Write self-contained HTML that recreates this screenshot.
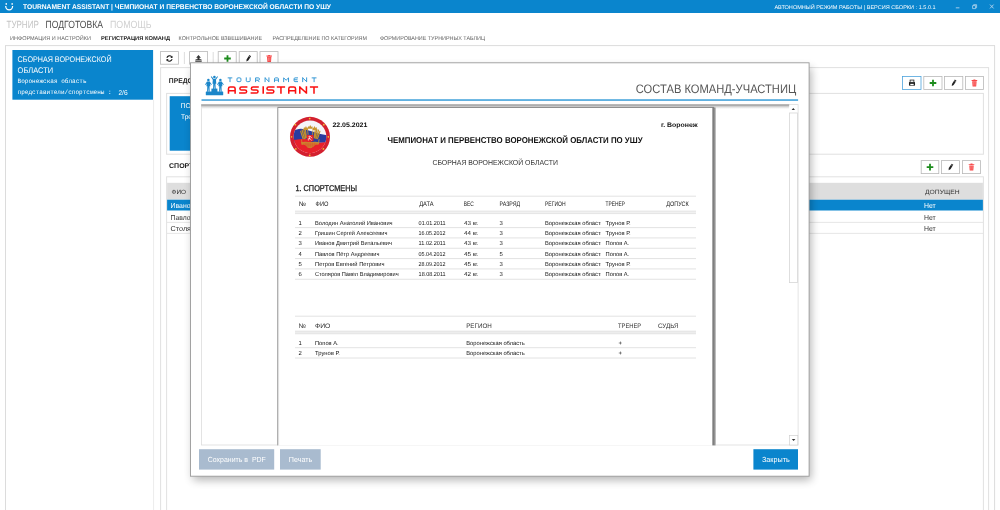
<!DOCTYPE html>
<html><head><meta charset="utf-8"><title>Tournament Assistant</title>
<style>
html,body{margin:0;padding:0;background:#fff;overflow:hidden}
body{width:1000px;height:510px;font-family:"Liberation Sans",sans-serif}
svg{display:block;opacity:0.999;will-change:transform;font-family:"Liberation Sans",sans-serif}
text{white-space:pre;text-rendering:geometricPrecision}
</style></head><body>
<svg width="1000" height="510" viewBox="0 0 1000 510">
<defs>
<filter id="sh" x="-10%" y="-10%" width="120%" height="125%"><feGaussianBlur stdDeviation="5"/></filter>
<linearGradient id="vtop" x1="0" y1="0" x2="0" y2="1"><stop offset="0" stop-color="#c4c4c4"/><stop offset="0.5" stop-color="#ececec"/><stop offset="1" stop-color="#ffffff"/></linearGradient>
<linearGradient id="pr" x1="0" y1="0" x2="1" y2="0"><stop offset="0" stop-color="#6e6e6e"/><stop offset="0.55" stop-color="#8c8c8c"/><stop offset="1" stop-color="#d4d4d4"/></linearGradient>
<clipPath id="emb"><circle cx="310" cy="136" r="17"/></clipPath>
<clipPath id="regclip"><rect x="540" y="215" width="61" height="70"/></clipPath>
</defs>
<rect x="0" y="0" width="1000" height="510" fill="#fff" />
<rect x="0" y="0" width="1000" height="13" fill="#0a85cd" />
<g fill="none" stroke="#fff" stroke-width="1.25" stroke-linecap="butt"><path d="M5.7 6 A3.45 3.9 0 0 0 12.6 6"/></g>
<rect x="5.6" y="3.1" width="1.3" height="1.7" fill="#fff"/><rect x="11.5" y="3.1" width="1.3" height="1.7" fill="#fff"/>
<text x="23" y="9.3" font-size="6.9" fill="#fff" font-weight="bold" textLength="308" lengthAdjust="spacingAndGlyphs">TOURNAMENT ASSISTANT | ЧЕМПИОНАТ И ПЕРВЕНСТВО ВОРОНЕЖСКОЙ ОБЛАСТИ ПО УШУ</text>
<text x="774.4" y="8.6" font-size="5.4" fill="#fff" textLength="161.3" lengthAdjust="spacingAndGlyphs">АВТОНОМНЫЙ РЕЖИМ РАБОТЫ | ВЕРСИЯ СБОРКИ : 1.5.0.1</text>
<rect x="955.8" y="7.4" width="3.6" height="0.9" fill="#b4d5ee" />
<path d="M972.6 5.6h3v3h-3z M973.6 5.6v-0.9h3v3h-1" fill="none" stroke="#b4d5ee" stroke-width="0.8"/>
<path d="M990 4.6l3.6 3.8M993.6 4.6l-3.6 3.8" stroke="#b4d5ee" stroke-width="0.9"/>
<text x="6.5" y="27.7" font-size="10.4" fill="#c4c4c4" textLength="32.3" lengthAdjust="spacingAndGlyphs">ТУРНИР</text>
<text x="45.5" y="27.7" font-size="10.4" fill="#505050" textLength="57.5" lengthAdjust="spacingAndGlyphs">ПОДГОТОВКА</text>
<text x="110" y="27.7" font-size="10.4" fill="#d0d0d0" textLength="41.6" lengthAdjust="spacingAndGlyphs">ПОМОЩЬ</text>
<text x="10" y="40.1" font-size="5.6" fill="#666" textLength="81" lengthAdjust="spacingAndGlyphs">ИНФОРМАЦИЯ И НАСТРОЙКИ</text>
<text x="101" y="40.1" font-size="5.6" fill="#222" font-weight="bold" textLength="69" lengthAdjust="spacingAndGlyphs">РЕГИСТРАЦИЯ КОМАНД</text>
<text x="178.6" y="40.1" font-size="5.6" fill="#666" textLength="83.4" lengthAdjust="spacingAndGlyphs">КОНТРОЛЬНОЕ ВЗВЕШИВАНИЕ</text>
<text x="272.5" y="40.1" font-size="5.6" fill="#666" textLength="94.5" lengthAdjust="spacingAndGlyphs">РАСПРЕДЕЛЕНИЕ ПО КАТЕГОРИЯМ</text>
<text x="380" y="40.1" font-size="5.6" fill="#666" textLength="105" lengthAdjust="spacingAndGlyphs">ФОРМИРОВАНИЕ ТУРНИРНЫХ ТАБЛИЦ</text>
<line x1="5" y1="45.6" x2="995" y2="45.6" stroke="#dcdcdc" stroke-width="1"/>
<line x1="5.5" y1="45.6" x2="5.5" y2="510" stroke="#dcdcdc" stroke-width="1"/>
<line x1="153.6" y1="100" x2="153.6" y2="510" stroke="#ececec" stroke-width="1"/>
<line x1="994.6" y1="45.6" x2="994.6" y2="510" stroke="#dcdcdc" stroke-width="1"/>
<rect x="12.4" y="50" width="140.7" height="49.7" fill="#0a85cd" />
<text x="17.6" y="62.2" font-size="8.1" fill="#fff" textLength="94" lengthAdjust="spacingAndGlyphs">СБОРНАЯ ВОРОНЕЖСКОЙ</text>
<text x="17.6" y="72.6" font-size="8.1" fill="#fff" textLength="35.6" lengthAdjust="spacingAndGlyphs">ОБЛАСТИ</text>
<text x="17.6" y="83.2" font-size="6.4" fill="#fff" font-family="Liberation Mono" textLength="69" lengthAdjust="spacingAndGlyphs">Воронежская область</text>
<text x="17.6" y="94" font-size="6.4" fill="#fff" font-family="Liberation Mono" textLength="94" lengthAdjust="spacingAndGlyphs">представители/спортсмены :</text>
<text x="118.4" y="94.6" font-size="7" fill="#fff" textLength="9.2" lengthAdjust="spacingAndGlyphs">2/6</text>
<rect x="160.4" y="51.6" width="18.2" height="12.6" fill="#fff" stroke="#b8b8b8" stroke-width="0.8" />
<line x1="184.4" y1="52" x2="184.4" y2="64" stroke="#d4d4d4" stroke-width="0.8"/>
<rect x="189.6" y="51.6" width="18" height="12.6" fill="#fff" stroke="#b8b8b8" stroke-width="0.8" />
<line x1="213.2" y1="52" x2="213.2" y2="64" stroke="#d4d4d4" stroke-width="0.8"/>
<rect x="218.2" y="51.6" width="18" height="12.6" fill="#fff" stroke="#b8b8b8" stroke-width="0.8" />
<rect x="239.2" y="51.6" width="18" height="12.6" fill="#fff" stroke="#b8b8b8" stroke-width="0.8" />
<rect x="260" y="51.6" width="18" height="12.6" fill="#fff" stroke="#b8b8b8" stroke-width="0.8" />
<g transform="translate(169.5,58.5)" fill="none" stroke="#222" stroke-width="1.1"><path d="M-2.6 -0.6A2.7 2.7 0 0 1 2.2 -1.6"/><path d="M2.6 0.6A2.7 2.7 0 0 1 -2.2 1.6"/></g>
<path d="M172.5 55.7v2.2h-2.2z M166.5 61.3v-2.2h2.2z" fill="#222"/>
<path d="M198.5 55l2.4 2.8h-1.4v1.5h1.6l0.8 1h-6.8l0.8 -1h1.6v-1.5h-1.4z M195.3 60.8h6.4v1h-6.4z" fill="#333"/>
<path d="M224.2 58.5h6.6M227.5 55.2v6.6" stroke="#1d8c1d" stroke-width="1.8" fill="none"/>
<g transform="translate(248.4,58.5) rotate(33)"><path d="M-1 -3.4h2v5.2l-1 1.9l-1 -1.9z" fill="#222"/><path d="M-1 -2.2h2" stroke="#fff" stroke-width="0.35"/></g>
<path d="M267.0 56.8h4.4l-0.4 5.1h-3.6z M266.4 55.6h5.6v0.8h-5.6z M268.2 54.9h2v0.7h-2z" fill="#f84848"/><path d="M268.5 57.5v3.6M269.9 57.5v3.6" stroke="#fff" stroke-width="0.35" opacity="0.8"/>
<rect x="160.6" y="67.6" width="828" height="460" fill="#fff" stroke="#e0e0e0" stroke-width="1" />
<text x="168.8" y="83.2" font-size="6.9" fill="#222" font-weight="bold" textLength="60" lengthAdjust="spacingAndGlyphs">ПРЕДСТАВИТЕЛИ</text>
<rect x="166.6" y="93.4" width="816.8" height="60.8" fill="#fff" stroke="#e0e0e0" stroke-width="1" />
<rect x="169.7" y="96.2" width="130" height="54.5" fill="#0a85cd" />
<text x="180.6" y="108" font-size="7" fill="#fff" textLength="34" lengthAdjust="spacingAndGlyphs">ПОПОВ А.</text>
<text x="181" y="119.2" font-size="6.8" fill="#fff" textLength="22" lengthAdjust="spacingAndGlyphs">Тренер</text>
<rect x="902.6" y="76.4" width="18.4" height="13" fill="#fff" stroke="#4da3dc" stroke-width="0.8" />
<rect x="923.8" y="76.4" width="18.2" height="13" fill="#fff" stroke="#b8b8b8" stroke-width="0.8" />
<rect x="944.6" y="76.4" width="18.2" height="13" fill="#fff" stroke="#b8b8b8" stroke-width="0.8" />
<rect x="965.4" y="76.4" width="18" height="13" fill="#fff" stroke="#b8b8b8" stroke-width="0.8" />
<g transform="translate(912,83.2) scale(1.12)"><rect x="-2.7" y="-1" width="5.4" height="3.2" rx="0.6" fill="#222"/><rect x="-1.7" y="-2.8" width="3.4" height="2" fill="#fff" stroke="#222" stroke-width="0.7"/><rect x="-1.5" y="0.6" width="3" height="1.2" fill="#fff"/></g>
<path d="M929.7 83h6.6M933 79.7v6.6" stroke="#1d8c1d" stroke-width="1.8" fill="none"/>
<g transform="translate(953.8,83) rotate(33)"><path d="M-1 -3.4h2v5.2l-1 1.9l-1 -1.9z" fill="#222"/><path d="M-1 -2.2h2" stroke="#fff" stroke-width="0.35"/></g>
<path d="M972.1999999999999 81.3h4.4l-0.4 5.1h-3.6z M971.6 80.1h5.6v0.8h-5.6z M973.4 79.4h2v0.7h-2z" fill="#f84848"/><path d="M973.6999999999999 82v3.6M975.1 82v3.6" stroke="#fff" stroke-width="0.35" opacity="0.8"/>
<text x="169" y="167.6" font-size="6.9" fill="#222" font-weight="bold" textLength="52" lengthAdjust="spacingAndGlyphs">СПОРТСМЕНЫ</text>
<rect x="921.2" y="160.6" width="17.6" height="13" fill="#fff" stroke="#b8b8b8" stroke-width="0.8" />
<rect x="941.6" y="160.6" width="18" height="13" fill="#fff" stroke="#b8b8b8" stroke-width="0.8" />
<rect x="962.6" y="160.6" width="17.8" height="13" fill="#fff" stroke="#b8b8b8" stroke-width="0.8" />
<path d="M926.7 167.1h6.6M930 163.79999999999998v6.6" stroke="#1d8c1d" stroke-width="1.8" fill="none"/>
<g transform="translate(950.6,167.1) rotate(33)"><path d="M-1 -3.4h2v5.2l-1 1.9l-1 -1.9z" fill="#222"/><path d="M-1 -2.2h2" stroke="#fff" stroke-width="0.35"/></g>
<path d="M969.3 165.4h4.4l-0.4 5.1h-3.6z M968.7 164.2h5.6v0.8h-5.6z M970.5 163.5h2v0.7h-2z" fill="#f84848"/><path d="M970.8 166.1v3.6M972.2 166.1v3.6" stroke="#fff" stroke-width="0.35" opacity="0.8"/>
<rect x="166.6" y="176.8" width="816.8" height="350" fill="#fff" stroke="#e2e2e2" stroke-width="1" />
<rect x="167.1" y="182.8" width="815.8" height="16.9" fill="#dedede" />
<text x="171.5" y="193.7" font-size="6.2" fill="#333" textLength="14.5" lengthAdjust="spacingAndGlyphs">ФИО</text>
<text x="925" y="194.3" font-size="6.2" fill="#333" textLength="34.6" lengthAdjust="spacingAndGlyphs">ДОПУЩЕН</text>
<rect x="167.1" y="199.7" width="815.8" height="10.8" fill="#0a85cd" />
<text x="170.6" y="207.8" font-size="7.2" fill="#fff" textLength="92.8" lengthAdjust="spacingAndGlyphs">Иванов Дмитрий Витальевич</text>
<text x="924" y="207.8" font-size="7.2" fill="#fff" textLength="11.7" lengthAdjust="spacingAndGlyphs">Нет</text>
<line x1="167" y1="222.4" x2="983" y2="222.4" stroke="#e0e0e0" stroke-width="0.8"/>
<line x1="167" y1="233.4" x2="983" y2="233.4" stroke="#e0e0e0" stroke-width="0.8"/>
<text x="170.6" y="219.6" font-size="7.2" fill="#333" textLength="77.3" lengthAdjust="spacingAndGlyphs">Павлов Пётр Андреевич</text>
<text x="924" y="219.6" font-size="7.2" fill="#333" textLength="11.7" lengthAdjust="spacingAndGlyphs">Нет</text>
<text x="170.6" y="231" font-size="7.2" fill="#333" textLength="107.1" lengthAdjust="spacingAndGlyphs">Столяров Павел Владимирович</text>
<text x="924" y="231" font-size="7.2" fill="#333" textLength="11.7" lengthAdjust="spacingAndGlyphs">Нет</text>
<rect x="193" y="68" width="618" height="412" fill="#000" opacity="0.3" filter="url(#sh)"/>
<rect x="190.5" y="62.8" width="618.6" height="413.4" fill="#fff" stroke="#9a9a9a" stroke-width="0.9" />
<g fill="#1b86c9">
<rect x="205.8" y="91.6" width="17.4" height="3.6" rx="0.5"/>
<rect x="211.4" y="88.6" width="6" height="3.4"/>
<circle cx="208.4" cy="79.9" r="1.25"/>
<path d="M206.9 81.6h3l0.5 4.6h-0.9l0.2 5.6h-1l-0.3 -4.6l-0.3 4.6h-1l0.2 -5.6h-0.9z"/>
<path d="M207 81.8l-2 2.6l0.5 0.5l1.9 -1.8z M209.8 81.8l2 2.6l-0.5 0.5l-1.9 -1.8z"/>
<circle cx="220.4" cy="79.9" r="1.25"/>
<path d="M218.9 81.6h3l0.5 4.6h-0.9l0.2 5.6h-1l-0.3 -4.6l-0.3 4.6h-1l0.2 -5.6h-0.9z"/>
<path d="M219 81.8l-2 2.6l0.5 0.5l1.9 -1.8z M221.8 81.8l2 2.6l-0.5 0.5l-1.9 -1.8z"/>
<circle cx="214.4" cy="77.1" r="1.3"/>
<path d="M212.9 78.9h3l0.4 4.8h-0.8l0.2 5.2h-1l-0.3 -4.4l-0.3 4.4h-1l0.2 -5.2h-0.8z"/>
<path d="M213 80l-2.2 -3.2l0.6 -0.5l2.2 2.4z M215.8 80l2.2 -3.2l-0.6 -0.5l-2.2 2.4z"/>
</g>
<path d="M227.7 77.875H232.29999999999998M230.0 77.875V82.10000000000001M238.009 77.875H239.89100000000002Q240.925 77.875 240.925 78.909V80.59100000000001Q240.925 81.62500000000001 239.89100000000002 81.62500000000001H238.009Q236.975 81.62500000000001 236.975 80.59100000000001V78.909Q236.975 77.875 238.009 77.875ZM246.275 77.4V80.59100000000001Q246.275 81.62500000000001 247.309 81.62500000000001H249.09100000000004Q250.12500000000003 81.62500000000001 250.12500000000003 80.59100000000001V77.4M255.575 82.10000000000001V77.875H258.39099999999996Q259.42499999999995 77.875 259.42499999999995 78.909V79.4398Q259.42499999999995 80.1636 258.39099999999996 80.1636H255.575M257.5 80.1636L259.42499999999995 82.10000000000001M265.07500000000005 82.10000000000001V77.4M265.07500000000005 77.875L268.925 81.62500000000001M268.925 82.10000000000001V77.4M274.475 82.10000000000001V78.909Q274.475 77.875 275.509 77.875H277.39099999999996Q278.42499999999995 77.875 278.42499999999995 78.909V82.10000000000001M274.475 80.126H278.42499999999995M283.675 82.10000000000001V77.875L286.1 80.22L288.525 77.875V82.10000000000001M298.0 77.875H295.04300000000006Q294.07500000000005 77.875 294.07500000000005 78.843V80.65700000000001Q294.07500000000005 81.62500000000001 295.04300000000006 81.62500000000001H298.0M294.07500000000005 79.75H297.525M302.675 82.10000000000001V77.4M302.675 77.875L306.62499999999994 81.62500000000001M306.62499999999994 82.10000000000001V77.4M311.7 77.875H316.5M314.1 77.875V82.10000000000001" fill="none" stroke="#2d93d3" stroke-width="0.95" stroke-linejoin="round"/>
<path d="M228.475 93.8V88.72500000000001Q228.475 87.075 230.125 87.075H233.47499999999997Q235.12499999999997 87.075 235.12499999999997 88.72500000000001V93.8M228.475 90.64999999999999H235.12499999999997M247.4 87.075H241.525Q239.875 87.075 239.875 88.72500000000001V88.39999999999999Q239.875 90.05 241.525 90.05H244.975Q246.625 90.05 246.625 91.7V91.37499999999999Q246.625 93.02499999999999 244.975 93.02499999999999H239.1M258.8 87.075H253.025Q251.375 87.075 251.375 88.72500000000001V88.39999999999999Q251.375 90.05 253.025 90.05H256.37500000000006Q258.02500000000003 90.05 258.02500000000003 91.7V91.37499999999999Q258.02500000000003 93.02499999999999 256.37500000000006 93.02499999999999H250.6M263.2 86.3V93.8M274.59999999999997 87.075H268.62499999999994Q266.97499999999997 87.075 266.97499999999997 88.72500000000001V88.39999999999999Q266.97499999999997 90.05 268.62499999999994 90.05H272.175Q273.825 90.05 273.825 91.7V91.37499999999999Q273.825 93.02499999999999 272.175 93.02499999999999H266.2M276.8 87.075H285.1M280.95000000000005 87.075V93.8M288.775 93.8V88.72500000000001Q288.775 87.075 290.42499999999995 87.075H293.87500000000006Q295.52500000000003 87.075 295.52500000000003 88.72500000000001V93.8M288.775 90.64999999999999H295.52500000000003M299.775 93.8V86.3M299.775 87.075L306.425 93.02499999999999M306.425 93.8V86.3M309.9 87.075H318.09999999999997M314.0 87.075V93.8" fill="none" stroke="#fa1010" stroke-width="1.55" stroke-linejoin="round"/>
<text x="635.8" y="92.5" font-size="12.3" fill="#565656" textLength="160.4" lengthAdjust="spacingAndGlyphs">СОСТАВ КОМАНД-УЧАСТНИЦ</text>
<rect x="201.5" y="99.2" width="596.6" height="1.7" fill="#4fa8dd" />
<rect x="201.5" y="104.6" width="596.6" height="340.4" fill="#fff" stroke="#dcdcdc" stroke-width="0.8" />
<rect x="201.2" y="104.2" width="588" height="2.2" fill="#adadad" />
<rect x="201.9" y="106.4" width="587" height="2.6" fill="url(#vtop)" />
<rect x="789.6" y="113" width="8" height="169.6" fill="#fff" stroke="#d6d6d6" stroke-width="0.8" />
<path d="M791.6 110l1.7 -1.9l1.7 1.9z" fill="#333"/>
<rect x="789.4" y="435.4" width="8.4" height="9.6" fill="#fff" stroke="#d0d0d0" stroke-width="0.7" />
<path d="M791.8 439.1l1.8 1.9l1.8 -1.9z" fill="#333"/>
<rect x="277.6" y="107.4" width="436.4" height="338" fill="#fff" />
<rect x="712.4" y="107.4" width="3.6" height="338" fill="url(#pr)" />
<line x1="277.4" y1="107.4" x2="714" y2="107.4" stroke="#777" stroke-width="0.9"/>
<line x1="277.5" y1="107.4" x2="277.5" y2="445.4" stroke="#b0b0b0" stroke-width="1"/>
<line x1="278.6" y1="108" x2="278.6" y2="445.4" stroke="#dcdcdc" stroke-width="1"/>
<g transform="translate(285,110) scale(0.098039)">
<circle cx="255" cy="274" r="204" fill="#d3202f"/>
<clipPath id="emb2"><circle cx="255" cy="274" r="166"/></clipPath>
<g clip-path="url(#emb2)">
<rect x="80" y="100" width="350" height="350" fill="#f5f5f8"/>
<path d="M80 220 C115 192 160 184 205 198 C265 214 335 240 430 258 L430 335 L80 335 Z" fill="#2a3b9f"/>
<path d="M80 304 C120 302 160 292 200 292 C232 292 262 324 300 332 C335 338 385 336 430 320 L430 460 L80 460 Z" fill="#e8202b"/>
</g>
<g stroke="#c8962f" stroke-width="12" stroke-linecap="round" fill="none">
<path d="M160 218 L184 292 M174 204 L198 292 M191 198 L210 288 M208 204 L218 280"/>
<path d="M356 218 L332 292 M342 204 L318 292 M325 198 L306 288 M308 204 L298 280"/>
</g>
<g stroke="#8a5f16" stroke-width="3" opacity="0.5" fill="none">
<path d="M167 214 L191 292 M182 202 L204 290 M199 200 L214 284 M349 214 L325 292 M334 202 L312 290 M317 200 L302 284"/>
</g>
<g fill="#c8962f">
<path d="M188 204 l6 -30 l10 10 l10 -20 l10 20 l8 -8 l4 28z"/>
<path d="M328 204 l-6 -30 l-10 10 l-10 -20 l-10 20 l-8 -8 l-4 28z"/>
<path d="M232 190 l4 -26 l9 9 l12 -20 l12 20 l9 -9 l4 26z"/>
<path d="M226 204 l8 -4 l8 52 l-12 0z M290 204 l-8 -4 l-8 52 l12 0z" opacity="0.8"/>
<path d="M164 330 C190 320 215 322 232 326 L284 326 C302 322 326 320 346 330 L340 358 C320 352 304 358 294 372 L262 390 L232 386 L216 366 C202 354 186 352 170 358 Z" opacity="0.85"/>
<path d="M340 300 l14 -4 l-8 50 l-8 0z M174 300 l-10 2 l4 40 l10 -2z" opacity="0.8"/>
</g>
<path d="M185 348 h150 M204 366 h106" stroke="#e8202b" stroke-width="4" opacity="0.8" fill="none"/>
<path d="M236 330 v50 M258 330 v58 M280 330 v50 M214 332 v30 M302 332 v30" stroke="#e8202b" stroke-width="3" opacity="0.55" fill="none"/>
<rect x="222" y="254" width="68" height="66" rx="5" fill="#e5242c"/>
<path d="M240 308 l16 -40 l-14 4 M256 268 l18 16 M250 290 l20 18 M236 296 l18 -6" stroke="#fff" stroke-width="6" fill="none" stroke-linecap="round"/>
<g fill="#f2c230"><circle cx="252" cy="87" r="9"/><circle cx="252" cy="462" r="9"/><circle cx="66" cy="273" r="9"/><circle cx="442" cy="273" r="9"/><circle cx="106" cy="150" r="9"/><circle cx="396" cy="150" r="9"/><circle cx="110" cy="397" r="9"/><circle cx="392" cy="397" r="9"/></g>
</g>
<text x="332.4" y="127" font-size="6.5" fill="#111" font-weight="bold" textLength="35" lengthAdjust="spacingAndGlyphs">22.05.2021</text>
<text x="697.6" y="127" font-size="6.5" fill="#111" font-weight="bold" text-anchor="end" textLength="36.6" lengthAdjust="spacingAndGlyphs">г. Воронеж</text>
<text x="387.4" y="142.9" font-size="8.5" fill="#111" font-weight="bold" textLength="255.2" lengthAdjust="spacingAndGlyphs">ЧЕМПИОНАТ И ПЕРВЕНСТВО ВОРОНЕЖСКОЙ ОБЛАСТИ ПО УШУ</text>
<text x="432.4" y="164.8" font-size="7.3" fill="#333" textLength="125.6" lengthAdjust="spacingAndGlyphs">СБОРНАЯ ВОРОНЕЖСКОЙ ОБЛАСТИ</text>
<text x="295.4" y="191.4" font-size="8.4" fill="#222" textLength="61.6" lengthAdjust="spacingAndGlyphs" stroke="#222" stroke-width="0.28">1. СПОРТСМЕНЫ</text>
<line x1="295" y1="196.2" x2="696" y2="196.2" stroke="#dadada" stroke-width="0.8"/>
<text x="298.8" y="205.6" font-size="6.4" fill="#222" textLength="7.2" lengthAdjust="spacingAndGlyphs">№</text>
<text x="315.6" y="205.6" font-size="6.4" fill="#222" textLength="12.8" lengthAdjust="spacingAndGlyphs">ФИО</text>
<text x="419.2" y="205.6" font-size="6.4" fill="#222" textLength="14.4" lengthAdjust="spacingAndGlyphs">ДАТА</text>
<text x="463.7" y="205.6" font-size="6.4" fill="#222" textLength="10" lengthAdjust="spacingAndGlyphs">ВЕС</text>
<text x="499.5" y="205.6" font-size="6.4" fill="#222" textLength="20.6" lengthAdjust="spacingAndGlyphs">РАЗРЯД</text>
<text x="545" y="205.6" font-size="6.4" fill="#222" textLength="20.6" lengthAdjust="spacingAndGlyphs">РЕГИОН</text>
<text x="605.5" y="205.6" font-size="6.4" fill="#222" textLength="19.4" lengthAdjust="spacingAndGlyphs">ТРЕНЕР</text>
<text x="666.2" y="205.6" font-size="6.4" fill="#222" textLength="22.6" lengthAdjust="spacingAndGlyphs">ДОПУСК</text>
<rect x="295" y="211" width="401" height="2.6" fill="#f1f1f1" />
<line x1="295" y1="211.1" x2="696" y2="211.1" stroke="#dcdcdc" stroke-width="0.7"/>
<line x1="295" y1="213.6" x2="696" y2="213.6" stroke="#dcdcdc" stroke-width="0.7"/>
<text x="298.6" y="224.8" font-size="5.9" fill="#151515">1</text>
<text x="315" y="224.8" font-size="5.9" fill="#151515" textLength="77.6" lengthAdjust="spacingAndGlyphs">Володин Анатолий Иванович</text>
<text x="418.6" y="224.8" font-size="5.9" fill="#151515" textLength="27" lengthAdjust="spacingAndGlyphs">01.01.2011</text>
<text x="464" y="224.8" font-size="5.9" fill="#151515" textLength="14.6" lengthAdjust="spacingAndGlyphs">43 кг.</text>
<text x="499.6" y="224.8" font-size="5.9" fill="#151515">3</text>
<g clip-path="url(#regclip)">
<text x="545" y="224.8" font-size="5.9" fill="#151515" textLength="58.6" lengthAdjust="spacingAndGlyphs">Воронежская область</text>
</g>
<text x="605.6" y="224.8" font-size="5.9" fill="#151515" textLength="25" lengthAdjust="spacingAndGlyphs">Трунов Р.</text>
<line x1="295" y1="227.6" x2="696" y2="227.6" stroke="#dadada" stroke-width="0.8"/>
<text x="298.6" y="235.13000000000002" font-size="5.9" fill="#151515">2</text>
<text x="315" y="235.13000000000002" font-size="5.9" fill="#151515" textLength="72.4" lengthAdjust="spacingAndGlyphs">Гришин Сергей Алексеевич</text>
<text x="418.6" y="235.13000000000002" font-size="5.9" fill="#151515" textLength="27" lengthAdjust="spacingAndGlyphs">16.05.2012</text>
<text x="464" y="235.13000000000002" font-size="5.9" fill="#151515" textLength="14.6" lengthAdjust="spacingAndGlyphs">44 кг.</text>
<text x="499.6" y="235.13000000000002" font-size="5.9" fill="#151515">3</text>
<g clip-path="url(#regclip)">
<text x="545" y="235.13000000000002" font-size="5.9" fill="#151515" textLength="58.6" lengthAdjust="spacingAndGlyphs">Воронежская область</text>
</g>
<text x="605.6" y="235.13000000000002" font-size="5.9" fill="#151515" textLength="25" lengthAdjust="spacingAndGlyphs">Трунов Р.</text>
<line x1="295" y1="237.93" x2="696" y2="237.93" stroke="#dadada" stroke-width="0.8"/>
<text x="298.6" y="245.46" font-size="5.9" fill="#151515">3</text>
<text x="315" y="245.46" font-size="5.9" fill="#151515" textLength="77" lengthAdjust="spacingAndGlyphs">Иванов Дмитрий Витальевич</text>
<text x="418.6" y="245.46" font-size="5.9" fill="#151515" textLength="27" lengthAdjust="spacingAndGlyphs">11.02.2011</text>
<text x="464" y="245.46" font-size="5.9" fill="#151515" textLength="14.6" lengthAdjust="spacingAndGlyphs">43 кг.</text>
<text x="499.6" y="245.46" font-size="5.9" fill="#151515">3</text>
<g clip-path="url(#regclip)">
<text x="545" y="245.46" font-size="5.9" fill="#151515" textLength="58.6" lengthAdjust="spacingAndGlyphs">Воронежская область</text>
</g>
<text x="605.6" y="245.46" font-size="5.9" fill="#151515" textLength="23.6" lengthAdjust="spacingAndGlyphs">Попов А.</text>
<line x1="295" y1="248.26" x2="696" y2="248.26" stroke="#dadada" stroke-width="0.8"/>
<text x="298.6" y="255.79000000000002" font-size="5.9" fill="#151515">4</text>
<text x="315" y="255.79000000000002" font-size="5.9" fill="#151515" textLength="64.4" lengthAdjust="spacingAndGlyphs">Павлов Пётр Андреевич</text>
<text x="418.6" y="255.79000000000002" font-size="5.9" fill="#151515" textLength="27" lengthAdjust="spacingAndGlyphs">05.04.2012</text>
<text x="464" y="255.79000000000002" font-size="5.9" fill="#151515" textLength="14.6" lengthAdjust="spacingAndGlyphs">45 кг.</text>
<text x="499.6" y="255.79000000000002" font-size="5.9" fill="#151515">5</text>
<g clip-path="url(#regclip)">
<text x="545" y="255.79000000000002" font-size="5.9" fill="#151515" textLength="58.6" lengthAdjust="spacingAndGlyphs">Воронежская область</text>
</g>
<text x="605.6" y="255.79000000000002" font-size="5.9" fill="#151515" textLength="23.6" lengthAdjust="spacingAndGlyphs">Попов А.</text>
<line x1="295" y1="258.59" x2="696" y2="258.59" stroke="#dadada" stroke-width="0.8"/>
<text x="298.6" y="266.12" font-size="5.9" fill="#151515">5</text>
<text x="315" y="266.12" font-size="5.9" fill="#151515" textLength="69.6" lengthAdjust="spacingAndGlyphs">Петров Евгений Петрович</text>
<text x="418.6" y="266.12" font-size="5.9" fill="#151515" textLength="27" lengthAdjust="spacingAndGlyphs">28.09.2012</text>
<text x="464" y="266.12" font-size="5.9" fill="#151515" textLength="14.6" lengthAdjust="spacingAndGlyphs">45 кг.</text>
<text x="499.6" y="266.12" font-size="5.9" fill="#151515">3</text>
<g clip-path="url(#regclip)">
<text x="545" y="266.12" font-size="5.9" fill="#151515" textLength="58.6" lengthAdjust="spacingAndGlyphs">Воронежская область</text>
</g>
<text x="605.6" y="266.12" font-size="5.9" fill="#151515" textLength="25" lengthAdjust="spacingAndGlyphs">Трунов Р.</text>
<line x1="295" y1="268.92" x2="696" y2="268.92" stroke="#dadada" stroke-width="0.8"/>
<text x="298.6" y="276.45" font-size="5.9" fill="#151515">6</text>
<text x="315" y="276.45" font-size="5.9" fill="#151515" textLength="83.6" lengthAdjust="spacingAndGlyphs">Столяров Павел Владимирович</text>
<text x="418.6" y="276.45" font-size="5.9" fill="#151515" textLength="27" lengthAdjust="spacingAndGlyphs">18.08.2011</text>
<text x="464" y="276.45" font-size="5.9" fill="#151515" textLength="14.6" lengthAdjust="spacingAndGlyphs">42 кг.</text>
<text x="499.6" y="276.45" font-size="5.9" fill="#151515">3</text>
<g clip-path="url(#regclip)">
<text x="545" y="276.45" font-size="5.9" fill="#151515" textLength="58.6" lengthAdjust="spacingAndGlyphs">Воронежская область</text>
</g>
<text x="605.6" y="276.45" font-size="5.9" fill="#151515" textLength="23.6" lengthAdjust="spacingAndGlyphs">Попов А.</text>
<line x1="295" y1="279.25" x2="696" y2="279.25" stroke="#dadada" stroke-width="0.8"/>
<line x1="295" y1="316.2" x2="696" y2="316.2" stroke="#dadada" stroke-width="0.8"/>
<text x="298.4" y="327.6" font-size="6.6" fill="#333" textLength="7.4" lengthAdjust="spacingAndGlyphs">№</text>
<text x="315" y="327.6" font-size="6.6" fill="#333" textLength="15.4" lengthAdjust="spacingAndGlyphs">ФИО</text>
<text x="466.2" y="327.6" font-size="6.6" fill="#333" textLength="25.6" lengthAdjust="spacingAndGlyphs">РЕГИОН</text>
<text x="618" y="327.6" font-size="6.6" fill="#333" textLength="23.2" lengthAdjust="spacingAndGlyphs">ТРЕНЕР</text>
<text x="658" y="327.6" font-size="6.6" fill="#333" textLength="20.6" lengthAdjust="spacingAndGlyphs">СУДЬЯ</text>
<rect x="295" y="331" width="401" height="2.8" fill="#ededed" />
<line x1="295" y1="331.1" x2="696" y2="331.1" stroke="#e0e0e0" stroke-width="0.7"/>
<line x1="295" y1="333.8" x2="696" y2="333.8" stroke="#e0e0e0" stroke-width="0.7"/>
<text x="298.6" y="344.9" font-size="5.9" fill="#151515">1</text>
<text x="315" y="344.9" font-size="5.9" fill="#151515" textLength="23.6" lengthAdjust="spacingAndGlyphs">Попов А.</text>
<text x="466.2" y="344.9" font-size="5.9" fill="#151515" textLength="58.6" lengthAdjust="spacingAndGlyphs">Воронежская область</text>
<text x="618.6" y="344.9" font-size="5.9" fill="#151515">+</text>
<line x1="295" y1="347.7" x2="696" y2="347.7" stroke="#dadada" stroke-width="0.8"/>
<text x="298.6" y="355.22999999999996" font-size="5.9" fill="#151515">2</text>
<text x="315" y="355.22999999999996" font-size="5.9" fill="#151515" textLength="25" lengthAdjust="spacingAndGlyphs">Трунов Р.</text>
<text x="466.2" y="355.22999999999996" font-size="5.9" fill="#151515" textLength="58.6" lengthAdjust="spacingAndGlyphs">Воронежская область</text>
<text x="618.6" y="355.22999999999996" font-size="5.9" fill="#151515">+</text>
<line x1="295" y1="358.03" x2="696" y2="358.03" stroke="#dadada" stroke-width="0.8"/>
<rect x="199" y="449.2" width="75.2" height="20.4" fill="#a9bbcf" />
<text x="207.8" y="461.9" font-size="7.4" fill="#fff" textLength="58" lengthAdjust="spacingAndGlyphs">Сохранить в  PDF</text>
<rect x="280" y="449.2" width="40.7" height="20.4" fill="#a9bbcf" />
<text x="288.8" y="461.9" font-size="7.4" fill="#fff" textLength="23.4" lengthAdjust="spacingAndGlyphs">Печать</text>
<rect x="753.4" y="449.2" width="44.6" height="20.4" fill="#0a85cd" />
<text x="762" y="461.9" font-size="7.4" fill="#fff" textLength="27.8" lengthAdjust="spacingAndGlyphs">Закрыть</text>
</svg>
</body></html>
